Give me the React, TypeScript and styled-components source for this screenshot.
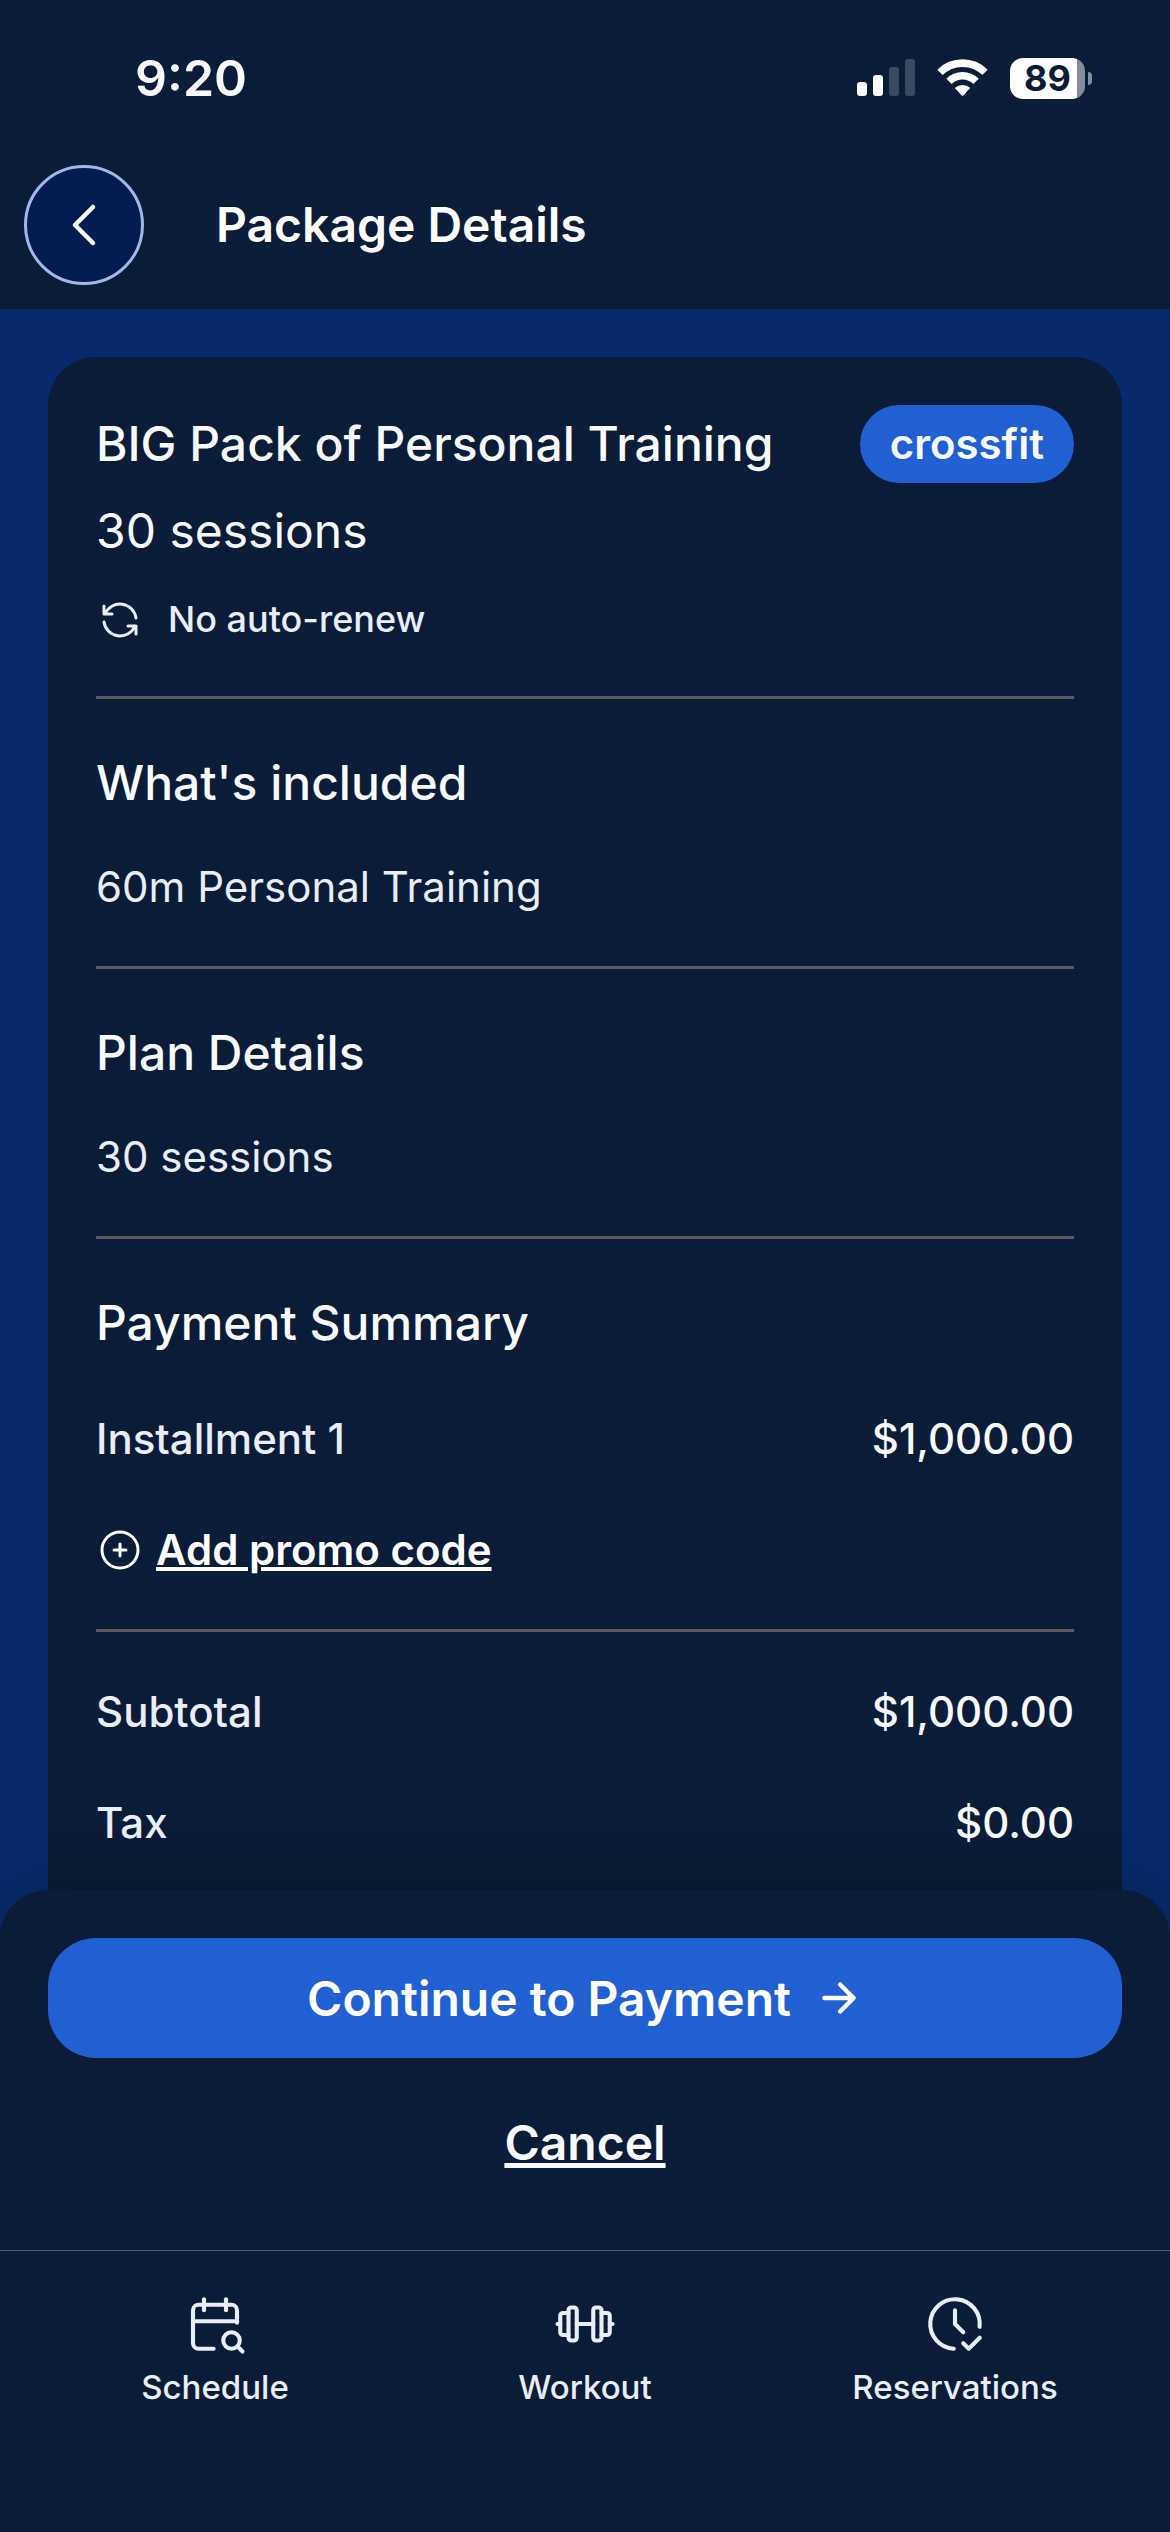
import React from "react";
import styled, { createGlobalStyle } from "styled-components";
import {
  TbBarbell,
  TbCalendarSearch,
  TbChevronLeft,
  TbCirclePlus,
  TbClockCheck,
  TbRefresh,
} from "react-icons/tb";
import { IoArrowForward } from "react-icons/io5";

const color = {
  surface: "#0a1c37",
  backdrop: "#082a6c",
  accent: "#2160d3",
  backFill: "#041d50",
  backRing: "#a0b9e8",
  heading: "#f8f9fb",
  body: "#e9edf5",
  white: "#ffffff",
  divider: "#5c5a5a",
};

const GlobalStyle = createGlobalStyle`
  *, *::before, *::after { box-sizing: border-box; }
  body {
    margin: 0;
    background: ${color.surface};
    color: ${color.heading};
    font-family: Inter, "Liberation Sans", sans-serif;
    font-optical-sizing: none;
    font-variation-settings: "opsz" 14;
  }
  h1, h2, p, dl, dt, dd, ul { margin: 0; padding: 0; }
  button { font: inherit; font-variation-settings: inherit; color: inherit; border: 0; background: none; padding: 0; cursor: pointer; }
  svg { flex: none; display: block; }
`;

const Screen = styled.div`
  display: flex;
  flex-direction: column;
  height: 100vh;
  overflow: hidden;
`;

const StatusBar = styled.div`
  display: flex;
  align-items: center;
  justify-content: space-between;
  height: 156px;
  padding: 0 78px 0 135px;
`;

const Time = styled.span`
  font-size: 50px;
  font-weight: 600;
  line-height: 60px;
`;

const StatusIcons = styled.div`
  display: flex;
  align-items: center;
  gap: 22px;
`;

const Battery = styled.div`
  display: flex;
  align-items: center;
  gap: 3px;
`;

const BatteryCell = styled.span<{ $level: number }>`
  width: 75px;
  height: 41px;
  border-radius: 13px;
  background: linear-gradient(
    to right,
    ${color.white} ${(p) => p.$level}%,
    #858d9b ${(p) => p.$level}%
  );
  color: ${color.surface};
  font-size: 36px;
  font-weight: 700;
  line-height: 41px;
  text-align: center;
`;

const BatteryTip = styled.span`
  width: 4px;
  height: 13px;
  border-radius: 0 4px 4px 0;
  background: #858d9b;
`;

const Header = styled.header`
  display: flex;
  align-items: center;
  gap: 72px;
  padding: 9px 24px 24px;
`;

const BackButton = styled.button`
  display: grid;
  place-items: center;
  width: 120px;
  height: 120px;
  border: 3px solid ${color.backRing};
  border-radius: 50%;
  background: ${color.backFill};
  color: ${color.white};
`;

const PageTitle = styled.h1`
  color: ${color.white};
  font-size: 48px;
  font-weight: 600;
  line-height: 72px;
`;

const Content = styled.main`
  display: flex;
  flex: 1;
  flex-direction: column;
  min-height: 0;
  padding: 48px 48px 0;
  background: ${color.backdrop};
`;

const Card = styled.article`
  flex: 1;
  min-height: 0;
  overflow: hidden;
  padding: 0 48px;
  border-radius: 48px 48px 0 0;
  background: ${color.surface};
`;

const Section = styled.section<{ $gap: number }>`
  display: flex;
  flex-direction: column;
  gap: ${(p) => p.$gap}px;
  padding: 48px 0;

  & + & {
    border-top: 3px solid ${color.divider};
  }
`;

const Overview = styled.div`
  display: flex;
  flex-direction: column;
  gap: 12px;
`;

const TitleRow = styled.div`
  display: flex;
  align-items: center;
  justify-content: space-between;
  gap: 24px;
`;

const Heading = styled.h2`
  font-size: 48px;
  font-weight: 500;
  line-height: 72px;
`;

const Sessions = styled.p`
  font-size: 48px;
  line-height: 72px;
`;

const Badge = styled.span`
  padding: 0 30px;
  border-radius: 39px;
  background: ${color.accent};
  font-size: 42px;
  font-weight: 600;
  line-height: 78px;
`;

const Renewal = styled.p`
  display: flex;
  align-items: center;
  gap: 24px;
  color: ${color.body};
  font-size: 36px;
  font-weight: 500;
  line-height: 57px;
`;

const BodyText = styled.p`
  color: ${color.body};
  font-size: 42px;
  line-height: 63px;
`;

const Amounts = styled.dl`
  display: flex;
  flex-direction: column;
  gap: 48px;
`;

const AmountRow = styled.div`
  display: flex;
  justify-content: space-between;
  font-size: 42px;
  font-weight: 500;
  line-height: 63px;

  dt {
    color: ${color.body};
  }
`;

const PromoButton = styled.button`
  display: flex;
  align-items: center;
  align-self: flex-start;
  gap: 12px;
  color: ${color.white};
  font-size: 42px;
  font-weight: 600;
  line-height: 63px;

  span {
    text-decoration: underline;
    text-decoration-thickness: 4px;
  }
`;

const ActionSheet = styled.div`
  position: relative;
  display: flex;
  flex-direction: column;
  gap: 24px;
  margin-top: -48px;
  padding: 48px;
  border-radius: 48px 48px 0 0;
  background: ${color.surface};
  box-shadow: 0 -6px 60px rgba(0, 0, 0, 0.2);
`;

const PrimaryButton = styled.button`
  display: flex;
  align-items: center;
  justify-content: center;
  gap: 24px;
  height: 120px;
  border-radius: 48px;
  background: ${color.accent};
  color: ${color.white};
  font-size: 48px;
  font-weight: 600;
`;

const CancelButton = styled.button`
  align-self: center;
  height: 120px;
  font-size: 48px;
  font-weight: 600;
  text-decoration: underline;
  text-decoration-thickness: 5px;
`;

const TabBar = styled.nav`
  position: relative;
  display: flex;
  padding: 40px 30px 121px;
  border-top: 1px solid ${color.divider};
  background: ${color.surface};
`;

const Tab = styled.button`
  display: flex;
  flex: 1;
  flex-direction: column;
  align-items: center;
  gap: 6px;
  color: ${color.body};
  font-size: 33px;
  font-weight: 500;
  line-height: 48px;
`;

const tabs = [
  { label: "Schedule", Icon: TbCalendarSearch },
  { label: "Workout", Icon: TbBarbell },
  { label: "Reservations", Icon: TbClockCheck },
];

function SignalIcon() {
  return (
    <svg width="58" height="38" viewBox="0 0 58 38" fill="#fff" aria-hidden="true">
      <rect x="0" y="23" width="10" height="14" rx="3" />
      <rect x="16" y="16" width="10" height="21" rx="3" />
      <rect x="32" y="8" width="10" height="29" rx="3" opacity="0.2" />
      <rect x="48" y="0" width="10" height="37" rx="3" opacity="0.2" />
    </svg>
  );
}

function WifiIcon() {
  return (
    <svg width="51" height="38" viewBox="0 0 51 38" fill="none" aria-hidden="true">
      <path d="M3 13.4a32 32 0 0 1 45 0" stroke="#fff" strokeWidth="7.6" />
      <path d="M12 22.4a19 19 0 0 1 27 0" stroke="#fff" strokeWidth="7.6" />
      <path d="M17.8 29a11.2 11.2 0 0 1 15.4 0l-7 7.6a1 1 0 0 1-1.4 0z" fill="#fff" />
    </svg>
  );
}

export default function App() {
  return (
    <>
      <GlobalStyle />
      <Screen>
        <StatusBar>
          <Time>9:20</Time>
          <StatusIcons>
            <SignalIcon />
            <WifiIcon />
            <Battery>
              <BatteryCell $level={89}>89</BatteryCell>
              <BatteryTip />
            </Battery>
          </StatusIcons>
        </StatusBar>

        <Header>
          <BackButton type="button" aria-label="Back">
            <TbChevronLeft size={72} strokeWidth={1.5} />
          </BackButton>
          <PageTitle>Package Details</PageTitle>
        </Header>

        <Content>
          <Card>
            <Section $gap={24}>
              <Overview>
                <TitleRow>
                  <Heading>BIG Pack of Personal Training</Heading>
                  <Badge>crossfit</Badge>
                </TitleRow>
                <Sessions>30 sessions</Sessions>
              </Overview>
              <Renewal>
                <TbRefresh size={48} strokeWidth={1.5} />
                No auto-renew
              </Renewal>
            </Section>

            <Section $gap={36}>
              <Heading>What's included</Heading>
              <BodyText>60m Personal Training</BodyText>
            </Section>

            <Section $gap={36}>
              <Heading>Plan Details</Heading>
              <BodyText>30 sessions</BodyText>
            </Section>

            <Section $gap={48}>
              <Heading>Payment Summary</Heading>
              <Amounts>
                <AmountRow>
                  <dt>Installment 1</dt>
                  <dd>$1,000.00</dd>
                </AmountRow>
              </Amounts>
              <PromoButton type="button">
                <TbCirclePlus size={48} strokeWidth={1.5} />
                <span>Add promo code</span>
              </PromoButton>
            </Section>

            <Section $gap={48}>
              <Amounts>
                <AmountRow>
                  <dt>Subtotal</dt>
                  <dd>$1,000.00</dd>
                </AmountRow>
                <AmountRow>
                  <dt>Tax</dt>
                  <dd>$0.00</dd>
                </AmountRow>
              </Amounts>
            </Section>
          </Card>
        </Content>

        <ActionSheet>
          <PrimaryButton type="button">
            Continue to Payment
            <IoArrowForward size={48} />
          </PrimaryButton>
          <CancelButton type="button">Cancel</CancelButton>
        </ActionSheet>

        <TabBar>
          {tabs.map(({ label, Icon }) => (
            <Tab key={label} type="button">
              <Icon size={66} strokeWidth={1.5} />
              {label}
            </Tab>
          ))}
        </TabBar>
      </Screen>
    </>
  );
}
